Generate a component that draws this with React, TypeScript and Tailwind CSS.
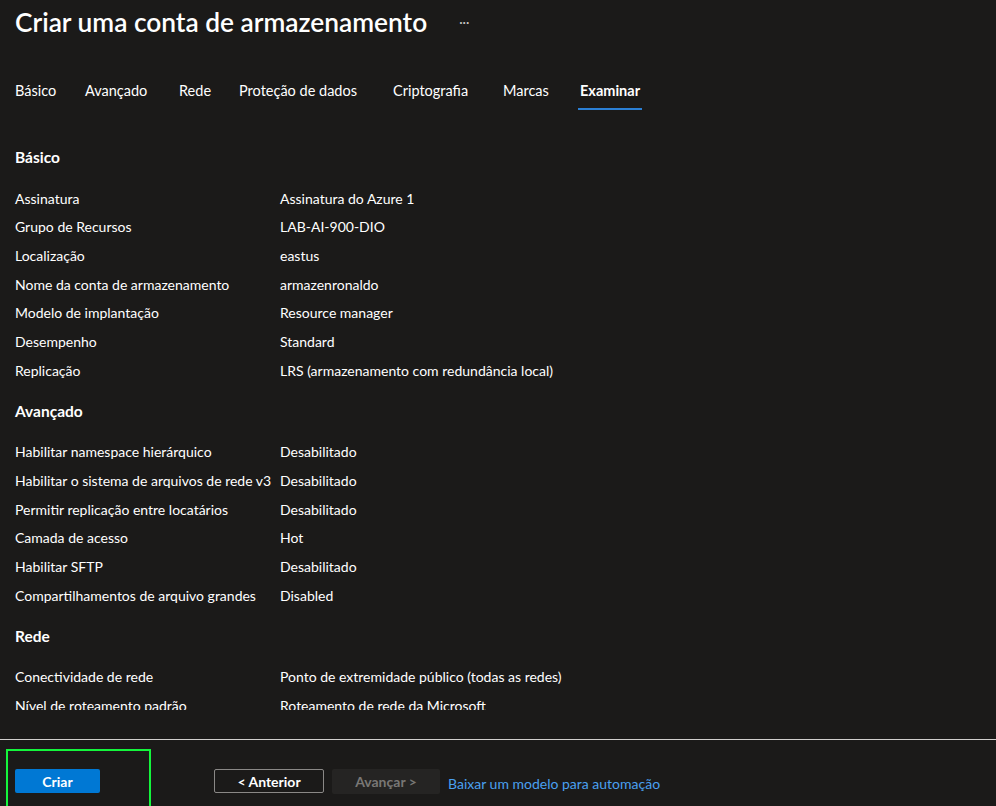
import React from "react";

const tabs = [
  { label: "Básico", w: "w-[70px]" },
  { label: "Avançado", w: "w-[94px]" },
  { label: "Rede", w: "w-[60px]" },
  { label: "Proteção de dados", w: "w-[154px]" },
  { label: "Criptografia", w: "w-[110px]" },
  { label: "Marcas", w: "w-[77px]" },
  { label: "Examinar", w: "w-[65px]", active: true },
];

const sections = [
  {
    title: "Básico",
    rows: [
      ["Assinatura", "Assinatura do Azure 1"],
      ["Grupo de Recursos", "LAB-AI-900-DIO"],
      ["Localização", "eastus"],
      ["Nome da conta de armazenamento", "armazenronaldo"],
      ["Modelo de implantação", "Resource manager"],
      ["Desempenho", "Standard"],
      ["Replicação", "LRS (armazenamento com redundância local)"],
    ],
  },
  {
    title: "Avançado",
    rows: [
      ["Habilitar namespace hierárquico", "Desabilitado"],
      ["Habilitar o sistema de arquivos de rede v3", "Desabilitado"],
      ["Permitir replicação entre locatários", "Desabilitado"],
      ["Camada de acesso", "Hot"],
      ["Habilitar SFTP", "Desabilitado"],
      ["Compartilhamentos de arquivo grandes", "Disabled"],
    ],
  },
  {
    title: "Rede",
    rows: [
      ["Conectividade de rede", "Ponto de extremidade público (todas as redes)"],
      ["Nível de roteamento padrão", "Roteamento de rede da Microsoft"],
    ],
  },
];

export default function App() {
  return (
    <div className="w-[996px] h-[806px] bg-[#1b1a19] text-white flex flex-col overflow-hidden relative font-['Lato','Liberation_Sans',sans-serif]">
      {/* cabeçalho */}
      <div className="h-[46px] px-[15px] flex items-center">
        <h1 className="text-[26.3px] font-semibold">Criar uma conta de armazenamento</h1>
        <span className="ml-[32px] text-[13px] text-[#c8c6c4]">···</span>
      </div>

      {/* abas */}
      <div className="mt-[28px] pl-[13px] flex">
        {tabs.map((t) => (
          <div key={t.label} className={`${t.w} h-[36px] flex items-center`}>
            <span
              className={
                t.active
                  ? "px-[2px] h-full flex items-center border-b-2 border-[#2b7fd4] font-bold text-[14.5px]"
                  : "px-[2px] h-full flex items-center border-b-2 border-transparent text-[14.5px]"
              }
            >
              {t.label}
            </span>
          </div>
        ))}
      </div>

      {/* conteúdo */}
      <div className="h-[600px] overflow-hidden pt-[33px] px-[15px]">
        {sections.map((s, i) => (
          <div key={s.title} className={i === 0 ? "" : "mt-[12px]"}>
            <div className="h-[30px] flex items-center font-bold text-[15.5px] mb-[11px]">{s.title}</div>
            {s.rows.map(([k, v]) => (
              <div key={k} className="h-[28.67px] flex items-center text-[14px]">
                <div className="w-[265px] shrink-0 whitespace-nowrap">{k}</div>
                <div className="whitespace-nowrap">{v}</div>
              </div>
            ))}
          </div>
        ))}
      </div>

      <div className="mt-[29px] h-px bg-[#d2d0ce]" />

      {/* rodapé */}
      <div className="flex items-center pl-[15px] pt-[28px] text-[14px]">
        <button className="w-[85px] h-[24px] rounded-[2px] bg-[#0078d4] text-white font-bold">Criar</button>
        <button className="ml-[114px] w-[110px] h-[24px] rounded-[2px] border border-[#8a8886] text-white font-bold">
          &lt; Anterior
        </button>
        <button className="ml-[8px] w-[108px] h-[25px] rounded-[2px] bg-[#252423] text-[#797775] font-bold">
          Avançar &gt;
        </button>
        <a className="ml-[8px] mt-[5px] text-[#4aa0f0]">Baixar um modelo para automação</a>
      </div>

      {/* destaque verde */}
      <div className="absolute left-[6px] top-[749px] w-[145px] h-[70px] border-2 border-[#14f53c]" />
    </div>
  );
}
